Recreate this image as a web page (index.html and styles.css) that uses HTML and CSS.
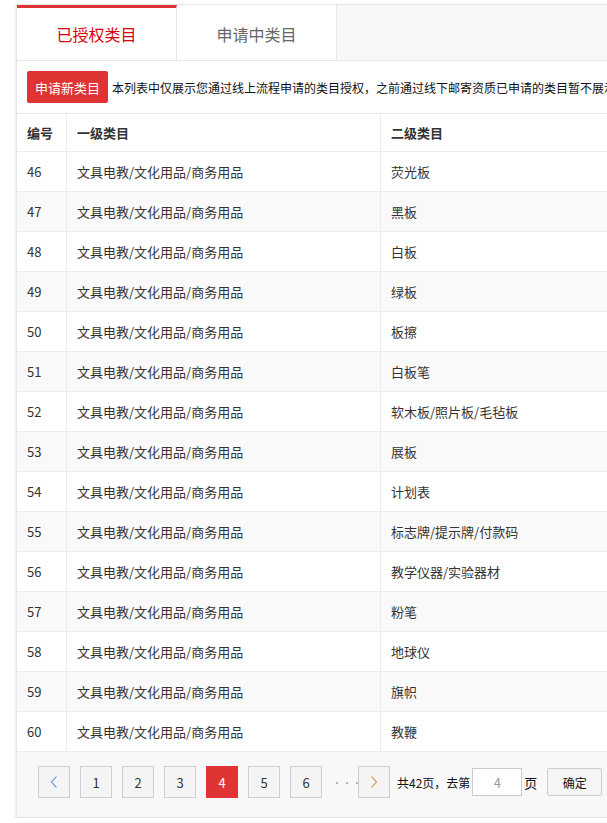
FILE: index.html
```html
<!DOCTYPE html>
<html>
<head>
<meta charset="utf-8">
<link rel="stylesheet" href="styles.css">
</head>
<body>
<div class="page">
  <div class="tabs">
    <div class="tab active">已授权类目</div>
    <div class="tab">申请中类目</div>
  </div>
  <div class="toolbar">
    <button class="btn-apply">申请新类目</button>
    <span class="notice">本列表中仅展示您通过线上流程申请的类目授权，之前通过线下邮寄资质已申请的类目暂不展示</span>
  </div>
  <table class="grid">
    <thead>
      <tr><th class="c-no">编号</th><th class="c-l1">一级类目</th><th class="c-l2">二级类目</th></tr>
    </thead>
    <tbody>
      <tr><td>46</td><td>文具电教/文化用品/商务用品</td><td>荧光板</td></tr>
      <tr><td>47</td><td>文具电教/文化用品/商务用品</td><td>黑板</td></tr>
      <tr><td>48</td><td>文具电教/文化用品/商务用品</td><td>白板</td></tr>
      <tr><td>49</td><td>文具电教/文化用品/商务用品</td><td>绿板</td></tr>
      <tr><td>50</td><td>文具电教/文化用品/商务用品</td><td>板擦</td></tr>
      <tr><td>51</td><td>文具电教/文化用品/商务用品</td><td>白板笔</td></tr>
      <tr><td>52</td><td>文具电教/文化用品/商务用品</td><td>软木板/照片板/毛毡板</td></tr>
      <tr><td>53</td><td>文具电教/文化用品/商务用品</td><td>展板</td></tr>
      <tr><td>54</td><td>文具电教/文化用品/商务用品</td><td>计划表</td></tr>
      <tr><td>55</td><td>文具电教/文化用品/商务用品</td><td>标志牌/提示牌/付款码</td></tr>
      <tr><td>56</td><td>文具电教/文化用品/商务用品</td><td>教学仪器/实验器材</td></tr>
      <tr><td>57</td><td>文具电教/文化用品/商务用品</td><td>粉笔</td></tr>
      <tr><td>58</td><td>文具电教/文化用品/商务用品</td><td>地球仪</td></tr>
      <tr><td>59</td><td>文具电教/文化用品/商务用品</td><td>旗帜</td></tr>
      <tr><td>60</td><td>文具电教/文化用品/商务用品</td><td>教鞭</td></tr>
    </tbody>
  </table>
  <div class="pager">
    <span class="pg arrow"><svg width="8" height="14" viewBox="0 0 8 14"><path d="M6.5 1.5 L1.5 7 L6.5 12.5" fill="none" stroke="#4a8fd0" stroke-width="1.1"/></svg></span>
    <span class="pg">1</span>
    <span class="pg">2</span>
    <span class="pg">3</span>
    <span class="pg current">4</span>
    <span class="pg">5</span>
    <span class="pg">6</span>
    <span class="dots">···</span>
    <span class="pg arrow"><svg width="8" height="14" viewBox="0 0 8 14"><path d="M1.5 1.5 L6.5 7 L1.5 12.5" fill="none" stroke="#d9892e" stroke-width="1.1"/></svg></span>
    <span class="total">共42页，去第</span>
    <span class="goto">4</span>
    <span class="unit">页</span>
    <span class="ok">确定</span>
  </div>
</div>
</body>
</html>
```

FILE: styles.css
```css
html, body {
  margin: 0;
  padding: 0;
  overflow: hidden;
  background: #fff;
}
body {
  font-family: "Noto Sans CJK SC", "Open Sans", sans-serif;
  color: #333;
  padding: 4px 0 0 16px;
  width: 1200px;
}
.page {
  width: 900px;
  border: 1px solid #e6e6e6;
  box-shadow: 0 2px 3px rgba(0,0,0,0.15);
  background: #fff;
}
.tabs {
  display: flex;
  height: 55px;
  background: #f8f8f8;
  border-bottom: 1px solid #e6e6e6;
}
.tab {
  background: #fff;
  border-right: 1px solid #e6e6e6;
  display: flex;
  align-items: center;
  justify-content: center;
  font-size: 16px;
  color: #666;
  box-sizing: border-box;
  width: 160px;
  padding-top: 3px;
}
.tab.active {
  color: #d7000f;
  border-top: 3px solid #e03434;
  padding-top: 0;
}
.toolbar {
  display: flex;
  align-items: center;
  height: 52px;
  padding: 0 10px;
  border-bottom: 1px solid #e8e8e8;
  white-space: nowrap;
  overflow: hidden;
}
.btn-apply {
  flex: none;
  height: 32px;
  width: 81px;
  padding: 0;
  border: none;
  border-radius: 2px;
  background: #e03434;
  color: #fff;
  font-family: inherit;
  font-size: 13px;
}
.notice {
  font-size: 12px;
  color: #111;
  margin-left: 4px;
}
.grid {
  border-collapse: collapse;
  width: 100%;
  font-size: 13px;
}
.grid th, .grid td {
  text-align: left;
  padding: 0 10px;
  border-bottom: 1px solid #ececec;
  border-right: 1px solid #ececec;
  white-space: nowrap;
}
.grid th {
  height: 37px;
  font-weight: bold;
  color: #333;
}
.grid td {
  height: 39px;
  color: #333;
}
.c-no { width: 29px; }
.c-l1 { width: 293px; }
.grid tbody tr:nth-child(even) td { background: #f9f9f9; }
.pager {
  display: flex;
  align-items: center;
  gap: 10px;
  background: #f8f8f8;
  padding: 14px 0 19px 21px;
  font-size: 13px;
}
.pg {
  flex: none;
  width: 30px;
  height: 30px;
  border: 1px solid #cfcfcf;
  background: #f4f4f4;
  display: flex;
  align-items: center;
  justify-content: center;
  color: #333;
}
.pg.current {
  background: #e03434;
  border-color: #e03434;
  color: #fff;
}
.dots {
  flex: none;
  color: #aaa;
  font-size: 10px;
  letter-spacing: 0;
  width: 16px;
  text-align: center;
}
.total {
  flex: none;
  margin-left: -3px;
  color: #111;
  font-size: 12px;
}
.goto {
  flex: none;
  width: 48px;
  height: 26px;
  border: 1px solid #ccc;
  background: #fff;
  color: #999;
  display: flex;
  align-items: center;
  justify-content: center;
  margin-left: -8px;
}
.unit {
  flex: none;
  margin-left: -8px;
  color: #111;
}
.ok {
  flex: none;
  width: 53px;
  height: 26px;
  border: 1px solid #ccc;
  border-radius: 2px;
  background: #f5f5f5;
  display: flex;
  align-items: center;
  justify-content: center;
  font-size: 12px;
  color: #111;
}
```
